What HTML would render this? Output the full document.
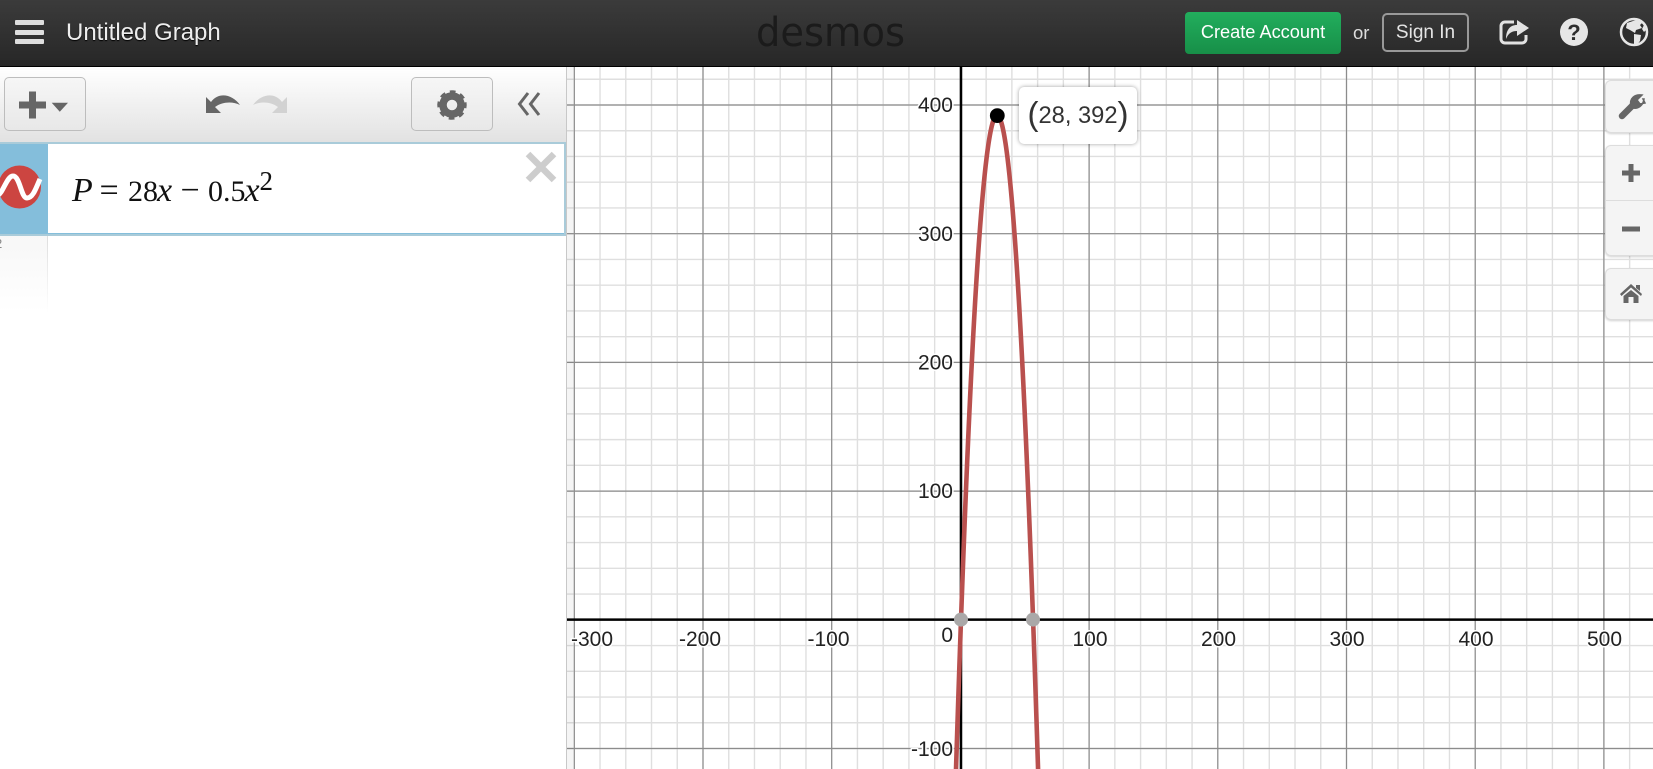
<!DOCTYPE html>
<html><head><meta charset="utf-8"><title>Untitled Graph</title>
<style>
html,body{margin:0;padding:0;width:1653px;height:769px;overflow:hidden;background:#fff;font-family:"Liberation Sans",Arial,sans-serif}
.a{position:absolute}
#hdr{left:0;top:0;width:1653px;height:66px;background:linear-gradient(#3b3b3b,#272727);border-bottom:1.5px solid #000;box-sizing:content-box}
.bar{left:14.5px;width:29px;height:5px;background:#dedede;border-radius:1px}
#title{left:66px;top:17px;font-size:24px;line-height:32px;color:#eee;text-shadow:0 1px 1px #000;white-space:nowrap}
#create{left:1185px;top:12px;width:156px;height:42px;border-radius:4px;background:linear-gradient(#22ae5d,#178f48);color:#fff;font-size:18.2px;line-height:41px;text-align:center}
#or{left:1353px;top:12px;color:#ddd;font-size:18.5px;line-height:42px}
#sign{left:1382px;top:13px;width:87px;height:39px;box-sizing:border-box;border:2px solid #999;border-radius:5px;color:#e4e4e4;font-size:19px;line-height:35px;text-align:center}
#panel{left:0;top:67px;width:566px;height:702px;background:#fff;border-right:1px solid #c8c8c8}
#tb{left:0;top:67px;width:566px;height:75px;background:linear-gradient(#fff,#e2e2e2)}
.btn{box-sizing:border-box;border:1.5px solid #bdbdbd;border-radius:5px;background:linear-gradient(#f6f6f6,#e8e8e8)}
#row{left:0;top:142px;width:566px;height:94px;box-sizing:border-box;background:#84bedb;border:2px solid #a9cbd9;border-left:0}
#rowin{left:48px;top:144px;width:516px;height:89px;background:#fff}
#gut{left:0;top:236px;width:47px;height:76px;background:linear-gradient(#f7f7f7,#fff);border-right:1px solid #e6e6e6;border-image:linear-gradient(#ddd,#fff) 1}
.m{position:absolute;font-family:"Liberation Serif",serif;font-size:30px;line-height:30px;color:#111;white-space:nowrap;top:177px}
.w{font-size:34px;top:175.6px}
.i{font-style:italic}
.tool{left:1604.5px;width:60px;box-sizing:border-box;background:#f4f4f4;border:1px solid #ddd;border-radius:6px;box-shadow:0 1px 2px rgba(0,0,0,.18)}
#tip{left:1019px;top:87px;width:118px;height:57px;background:#fff;border-radius:5px;box-shadow:0 0 4px rgba(0,0,0,.38);color:#333;font-size:23.7px;line-height:58px;text-align:center;white-space:nowrap}
#tip span{font-size:33px;vertical-align:-2px;line-height:0}
</style></head><body>

<svg class="a" style="left:0;top:0" width="1653" height="769" viewBox="0 0 1653 769">
<rect x="567" y="67" width="1086" height="702" fill="#fff"/>
<g fill="none">
<path d="M573.6 418H1653" stroke="#dfdfdf" stroke-width="702" stroke-dasharray="1.4 24.34"/>
<path d="M1110 78.56V769" stroke="#dfdfdf" stroke-width="1086" stroke-dasharray="1.4 24.34"/>
<path d="M573.7 418H1653" stroke="#8c8c8c" stroke-width="702" stroke-dasharray="1.2 127.5"/>
<path d="M1110 104.4V769" stroke="#8c8c8c" stroke-width="1086" stroke-dasharray="1.2 127.5"/>
</g>
<rect x="567" y="67" width="6" height="702" fill="#000" opacity=".04"/>
<path d="M961 67V769" stroke="#000" stroke-width="2.5"/>
<path d="M567 619.6H1653" stroke="#000" stroke-width="2.5"/>
<g font-family="'Liberation Sans',Arial,sans-serif" font-size="21" fill="#222" stroke="#fff" stroke-width="3" paint-order="stroke" stroke-linejoin="round">
<g text-anchor="end">
<text x="953" y="112">400</text>
<text x="953" y="241">300</text>
<text x="953" y="369.500">200</text>
<text x="953" y="498">100</text>
<text x="953" y="756">-100</text>
<text x="953" y="642">0</text>
</g>
<g text-anchor="middle">
<text x="592" y="646">-300</text>
<text x="700" y="646">-200</text>
<text x="828.500" y="646">-100</text>
<text x="1090" y="646">100</text>
<text x="1218.500" y="646">200</text>
<text x="1347" y="646">300</text>
<text x="1476" y="646">400</text>
<text x="1604.500" y="646">500</text>
</g>
</g>
<path d="M955.68 779.8Q997.04 -549.1 1038.4 779.8" fill="none" stroke="#b9504e" stroke-width="4.6"/>
<circle cx="961" cy="619.6" r="7" fill="#aaa8a8"/>
<circle cx="1033" cy="619.6" r="7" fill="#aaa8a8"/>
<circle cx="997.3" cy="115.6" r="7.4" fill="#000"/>
</svg>

<div class="a" id="tip"><span>(</span>28, 392<span>)</span></div>

<div class="a" id="hdr"></div>
<div class="a bar" style="top:20px"></div>
<div class="a bar" style="top:30px"></div>
<div class="a bar" style="top:39px"></div>
<div class="a" id="title">Untitled Graph</div>
<svg class="a" style="left:700px;top:0" width="240" height="66" viewBox="0 0 240 66">
<text x="56" y="46" font-family="'DejaVu Sans',sans-serif" font-size="40" fill="#1b1b1b" textLength="149" lengthAdjust="spacingAndGlyphs">desmos</text>
</svg>
<div class="a" id="create">Create Account</div>
<div class="a" id="or">or</div>
<div class="a" id="sign">Sign In</div>
<svg class="a" style="left:1490px;top:5px" width="163" height="55" viewBox="1490 5 163 55">
<path d="M1514 22H1505a4 4 0 0 0-4 4V39a4 4 0 0 0 4 4H1522a4 4 0 0 0 4-4V35" fill="none" stroke="#e2e2e2" stroke-width="3"/>
<path d="M1517 20L1529 28L1517 36V31C1511 31 1508 34 1506 39C1506 30 1510 25 1517 25Z" fill="#e2e2e2"/>
<circle cx="1574" cy="32" r="14" fill="#e6e6e6"/>
<text x="1574" y="40" text-anchor="middle" font-family="'Liberation Sans',sans-serif" font-weight="bold" font-size="22" fill="#2d2d2d">?</text>
<circle cx="1634" cy="32" r="13" fill="#2e2e2e" stroke="#e6e6e6" stroke-width="2.500"/>
<path d="M1627 23L1636 20L1643 22L1640 25L1642 28L1636 30L1635 33L1630 30L1626 28Z M1634 34L1641 35L1640 41L1636 46L1634 44Z M1644 25L1646 30L1644 32L1642 29Z" fill="#e6e6e6"/>
</svg>

<div class="a" id="panel"></div>
<div class="a" id="tb"></div>
<div class="a btn" style="left:4px;top:77px;width:82px;height:54px"></div>
<svg class="a" style="left:0;top:67px" width="566" height="75" viewBox="0 67 566 75">
<path d="M19 105H46M32.500 91.500V118.500" stroke="#666" stroke-width="7"/>
<path d="M51.700 102.700H68L59.800 111.700Z" fill="#666"/>
<path d="M206 97V113H221L215 107C222 102 232 101 240 105C233 95 219 91 211 102Z" fill="#666"/>
<path d="M287 97V113H272L278 107C271 102 261 101 253 105C260 95 274 91 282 102Z" fill="#d2d2d2"/>
</svg>
<div class="a btn" style="left:411px;top:77px;width:82px;height:54px"></div>
<svg class="a" style="left:430px;top:83px" width="44" height="44" viewBox="-22 -22 44 44">
<circle r="9" fill="none" stroke="#666" stroke-width="7.500"/>
<circle r="12.500" fill="none" stroke="#666" stroke-width="4.500" stroke-dasharray="5.300 4.520" transform="rotate(-11)"/>
</svg>
<svg class="a" style="left:513px;top:88px" width="34" height="32" viewBox="0 0 34 32">
<path d="M15 5L6.500 16L15 27M26 5L17.500 16L26 27" fill="none" stroke="#666" stroke-width="3"/>
</svg>

<div class="a" id="row"></div>
<div class="a" id="rowin"></div>
<svg class="a" style="left:0;top:160px" width="48" height="54" viewBox="0 160 48 54">
<circle cx="19.500" cy="187" r="21.500" fill="#cc4541"/>
<path d="M-2 195C3 193 7 176 13 176C20 176 21 198 27 198C33 198 36 188 40 179" fill="none" stroke="#fff" stroke-width="5"/>
</svg>
<svg class="a" style="left:524px;top:150px" width="34" height="34" viewBox="0 0 34 34">
<path d="M4 4L30 30M30 4L4 30" stroke="#cdcdcd" stroke-width="6.500"/>
</svg>
<div class="m w i" style="left:72px">P</div>
<div class="m w" style="left:99.5px">=</div>
<div class="m" style="left:128px">28</div>
<div class="m w i" style="left:157px">x</div>
<div class="m w" style="left:180.5px">−</div>
<div class="m" style="left:208px">0.5</div>
<div class="m w i" style="left:244.5px">x</div>
<div class="m" style="left:259.500px;top:165.900px;font-size:27px">2</div>
<div class="a" id="gut"></div>
<div class="a" style="left:-5px;top:236px;font-size:13px;line-height:16px;color:#888">2</div>

<div class="a tool" style="top:80px;height:53px"></div>
<div class="a tool" style="top:145px;height:111px"></div>
<div class="a" style="left:1605px;top:200px;width:48px;height:1px;background:#ddd"></div>
<div class="a tool" style="top:268px;height:52px"></div>
<svg class="a" style="left:1606px;top:80px" width="47" height="240" viewBox="1606 80 47 240">
<path d="M1622 116L1634 104" stroke="#666" stroke-width="6.500" stroke-linecap="round"/>
<path d="M1631 106C1629 98 1635 94 1642 95L1637 100L1640 104L1645 103L1643 99L1644 99C1643 106 1638 109 1633 108Z" fill="#666" stroke="#666" stroke-width="1.500"/>
<path d="M1622 173H1640M1631 164V182" stroke="#666" stroke-width="5"/>
<path d="M1622 229H1640" stroke="#666" stroke-width="5"/>
<path d="M1620 294L1631 284L1642 294L1641 296L1631 287.500L1621.500 296Z M1623.500 296L1631 290L1638.500 296V303H1633.500V297H1628.500V303H1623.500Z M1636 285H1640V291L1636 288Z" fill="#666"/>
</svg>
</body></html>
